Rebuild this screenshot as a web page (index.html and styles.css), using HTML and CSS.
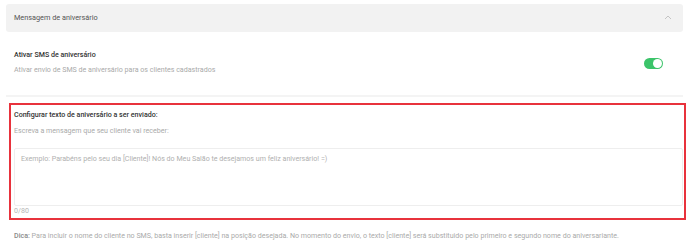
FILE: index.html
```html
<!DOCTYPE html>
<html lang="pt-BR">
  <head>
    <meta charset="UTF-8" />
    <meta name="viewport" content="width=device-width, initial-scale=1.0" />
    <title>Mensagem de aniversário</title>
    <link rel="stylesheet" href="styles.css">
  </head>
  <body>
    <div class="page">
      <div class="panel-header">
        <span>Mensagem de aniversário</span>
        <svg class="chevron" width="8" height="5" viewBox="0 0 8 5">
          <path d="M1 4 L4 1 L7 4" fill="none" stroke="#c4c4c4" stroke-width="1" />
        </svg>
      </div>

      <div class="setting-row">
        <div class="setting-text">
          <div class="setting-title">Ativar SMS de aniversário</div>
          <div class="setting-desc">Ativar envio de SMS de aniversário para os clientes cadastrados</div>
        </div>
        <div class="toggle on"><div class="knob"></div></div>
      </div>

      <div class="highlight">
        <div class="field-title">Configurar texto de aniversário a ser enviado:</div>
        <div class="field-desc">Escreva a mensagem que seu cliente vai receber:</div>
        <textarea class="message" placeholder="Exemplo: Parabéns pelo seu dia [Cliente]! Nós do Meu Salão te desejamos um feliz aniversário! =)"></textarea>
        <div class="counter">0/80</div>
      </div>

      <p class="tip"><b>Dica:</b> Para incluir o nome do cliente no SMS, basta inserir [cliente] na posição desejada. No momento do envio, o texto [cliente] será substituido pelo primeiro e segundo nome do aniversariante.</p>
    </div>
  </body>
</html>
```

FILE: styles.css
```css
body {
  margin: 0;
  background-color: #fff;
  font-family: "Roboto", "Liberation Sans", sans-serif;
  font-size: 7.1px;
  line-height: 10px;
  color: #333;
}

.page {
  padding: 4px 5px 0 6px;
}

.panel-header {
  height: 28px;
  background-color: #f2f2f2;
  border-radius: 3px;
  display: flex;
  align-items: center;
  justify-content: space-between;
  padding: 0 8px;
  font-size: 7.3px;
  color: #555;
}

.chevron {
  margin-right: 3px;
  margin-top: -2px;
}

.setting-row {
  display: flex;
  align-items: center;
  justify-content: space-between;
  padding: 18px 8px 20px;
  border-bottom: 2px solid #f4f4f4;
}

.setting-title {
  font-weight: 500;
  color: #333;
  margin-bottom: 5px;
}

.setting-desc {
  color: #aaa;
}

.toggle {
  width: 19px;
  height: 11px;
  border-radius: 6px;
  background-color: #d0d0d0;
  margin-right: 12px;
  margin-top: 1px;
  display: flex;
  align-items: center;
  padding: 0 1px;
  box-sizing: border-box;
}

.toggle.on {
  background-color: #3cc46a;
  justify-content: flex-end;
}

.knob {
  width: 9px;
  height: 9px;
  border-radius: 50%;
  background-color: #fff;
}

.highlight {
  margin: 6px -3px 0 3px;
  border: 2px solid #e8323c;
  padding: 5px 1px 2px 3px;
}

.field-title {
  font-weight: 500;
  color: #333;
  margin-bottom: 6px;
}

.field-desc {
  color: #aaa;
}

.message {
  display: block;
  width: 100%;
  height: 58px;
  box-sizing: border-box;
  margin-top: 12px;
  border: 1px solid #eeeeee;
  border-radius: 2px;
  padding: 5px 6px;
  font-family: inherit;
  font-size: 7.1px;
  line-height: 10px;
  resize: none;
  outline: none;
}

.message::placeholder {
  color: #b0b0b0;
}

.counter {
  color: #b5b5b5;
}

.tip {
  margin: 11px 0 0 8px;
  color: #aaa;
}

.tip b {
  font-weight: 500;
  color: #888;
}
```
